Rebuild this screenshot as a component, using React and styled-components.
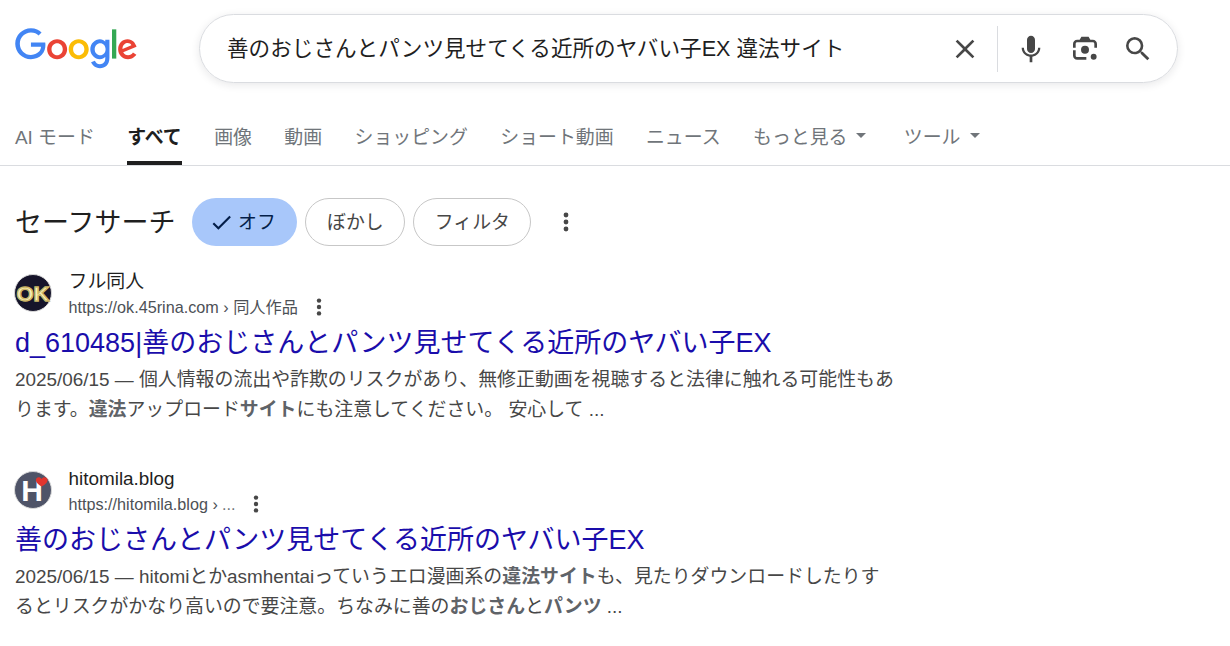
import React from "react";
import styled, { createGlobalStyle } from "styled-components";

const FONT = `Arial, "Liberation Sans", "Noto Sans CJK JP", sans-serif`;

const Global = createGlobalStyle`
  html, body { margin: 0; padding: 0; background: #fff; }
  body { font-family: ${FONT}; width: 1230px; height: 646px; overflow: hidden; }
`;

const Page = styled.div`
  display: flex;
  flex-direction: column;
`;

const Header = styled.header`
  display: flex;
  align-items: flex-start;
  padding: 14px 0 0 15px;
  height: 84px;
  box-sizing: border-box;
`;

const LogoSvg = styled.svg`
  width: 122.5px;
  height: 41.4px;
  margin: 14px 61.5px 0 0;
  flex: none;
`;

const SearchBox = styled.div`
  width: 979px;
  height: 69px;
  box-sizing: border-box;
  border: 1px solid #dadce0;
  border-radius: 35px;
  box-shadow: 0 2px 8px rgba(32, 33, 36, 0.1);
  display: flex;
  align-items: center;
  padding: 0 23px 0 27px;
`;

const Query = styled.div`
  flex: 1;
  font-size: 21.6px;
  color: #1f1f1f;
  white-space: nowrap;
  padding-bottom: 5px;
`;

const SearchIcons = styled.div`
  display: flex;
  align-items: center;
`;

const ClearButton = styled.div`
  display: flex;
  padding-right: 16px;
  margin-right: 17px;
  height: 46px;
  align-items: center;
  border-right: 1px solid #dadce0;
`;

const IconSlot = styled.div`
  display: flex;
  width: 32px;
  height: 32px;
  align-items: center;
  justify-content: center;
  margin-left: ${(p) => p.$gap || 0}px;
`;

const Tabs = styled.nav`
  display: flex;
  gap: 32.4px;
  height: 82px;
  padding-left: 15px;
  box-sizing: border-box;
  border-bottom: 1px solid #dadce0;
`;

const Tab = styled.div`
  display: flex;
  align-items: center;
  height: 81px;
  padding-top: 25px;
  box-sizing: border-box;
  font-size: 18.9px;
  white-space: nowrap;
  color: ${(p) => (p.$active ? "#1f1f1f" : "#70757a")};
  font-weight: ${(p) => (p.$active ? 700 : 400)};
  border-bottom: ${(p) => (p.$active ? "4px solid #1f1f1f" : "4px solid transparent")};
  margin-left: ${(p) => p.$offset || 0}px;
`;

const Caret = styled.span`
  width: 0;
  height: 0;
  margin-left: 9px;
  border-left: 5px solid transparent;
  border-right: 5px solid transparent;
  border-top: 5px solid #70757a;
`;

const SafeRow = styled.div`
  display: flex;
  align-items: center;
  margin-top: 32px;
  padding-left: 15px;
  height: 48px;
`;

const SafeTitle = styled.div`
  font-size: 27px;
  color: #1f1f1f;
  margin-right: 17px;
  white-space: nowrap;
  padding-bottom: 4px;
`;

const Chip = styled.div`
  height: 48px;
  box-sizing: border-box;
  width: ${(p) => p.$w}px;
  margin-right: 8px;
  padding-bottom: 3px;
  border-radius: 24px;
  display: flex;
  align-items: center;
  justify-content: center;
  gap: 4px;
  font-size: 18.9px;
  color: ${(p) => (p.$on ? "#041e49" : "#474747")};
  background: ${(p) => (p.$on ? "#a8c7fa" : "#fff")};
  border: ${(p) => (p.$on ? "none" : "1px solid #c7c7c7")};
`;

const CheckSvg = styled.svg`
  width: 25px;
  height: 25px;
  margin: 3px 0 0 -5px;
`;

const Dots = styled.svg`
  flex: none;
  width: ${(p) => p.$size || 22}px;
  height: ${(p) => p.$size || 22}px;
  margin-left: ${(p) => p.$gap || 0}px;
`;

const Results = styled.main`
  padding-left: 15px;
  margin-top: 22px;
  display: flex;
  flex-direction: column;
  gap: 40px;
`;

const Result = styled.article`
  width: 880px;
`;

const SiteRow = styled.div`
  display: flex;
  align-items: center;
  gap: 17.5px;
  height: 50px;
`;

const Favicon = styled.svg`
  width: 38px;
  height: 38px;
  margin: 0 -1px;
  flex: none;
`;

const SiteText = styled.div`
  display: flex;
  flex-direction: column;
  padding-top: 2px;
`;

const SiteName = styled.div`
  font-size: 18.9px;
  line-height: 26px;
  color: #1f1f1f;
`;

const UrlLine = styled.div`
  display: flex;
  align-items: center;
  font-size: 16.2px;
  line-height: 24px;
  color: #4d5156;
  white-space: nowrap;
`;

const Title = styled.h3`
  margin: 7px 0 0;
  font-size: 27px;
  line-height: 36px;
  font-weight: 400;
  color: #1a0dab;
  white-space: nowrap;
`;

const Snippet = styled.p`
  margin: 4px 0 0;
  font-size: 18.9px;
  line-height: 30px;
  color: #474747;
  b { font-weight: 700; color: #5f6368; }
`;

const Ellipsis = styled.span`
  color: #70757a;
  margin-left: 0.25em;
`;

const MoreDots = ({ size, gap }) => (
  <Dots viewBox="0 0 24 24" $size={size} $gap={gap} fill="#474747">
    <circle cx="12" cy="5" r="2.4" />
    <circle cx="12" cy="12" r="2.4" />
    <circle cx="12" cy="19" r="2.4" />
  </Dots>
);

const GoogleLogo = () => (
  <LogoSvg viewBox="0 0 272 92">
    <path fill="#EA4335" d="M115.75 47.18c0 12.77-9.99 22.18-22.25 22.18s-22.25-9.41-22.25-22.18C71.25 34.32 81.24 25 93.5 25s22.25 9.32 22.25 22.18zm-9.74 0c0-7.98-5.79-13.44-12.51-13.44S80.99 39.2 80.99 47.18c0 7.9 5.79 13.44 12.51 13.44s12.51-5.55 12.51-13.44z" />
    <path fill="#FBBC05" d="M163.75 47.18c0 12.77-9.99 22.18-22.25 22.18s-22.25-9.41-22.25-22.18c0-12.85 9.99-22.18 22.25-22.18s22.25 9.32 22.25 22.18zm-9.74 0c0-7.98-5.79-13.44-12.51-13.44s-12.51 5.46-12.51 13.44c0 7.9 5.79 13.44 12.51 13.44s12.51-5.55 12.51-13.44z" />
    <path fill="#4285F4" d="M209.75 26.34v39.82c0 16.38-9.66 23.07-21.08 23.07-10.75 0-17.22-7.19-19.66-13.07l8.48-3.53c1.51 3.61 5.21 7.87 11.17 7.87 7.31 0 11.84-4.51 11.84-13v-3.19h-.34c-2.18 2.69-6.38 5.04-11.68 5.04-11.09 0-21.25-9.66-21.25-22.09 0-12.52 10.16-22.26 21.25-22.26 5.29 0 9.49 2.35 11.68 4.96h.34v-3.61h9.25zm-8.56 20.92c0-7.81-5.21-13.52-11.84-13.52-6.72 0-12.35 5.71-12.35 13.52 0 7.73 5.63 13.36 12.35 13.36 6.63 0 11.84-5.63 11.84-13.36z" />
    <path fill="#34A853" d="M225 3v65h-9.5V3h9.5z" />
    <path fill="#EA4335" d="M262.02 54.48l7.56 5.04c-2.44 3.61-8.32 9.83-18.48 9.83-12.6 0-22.01-9.74-22.01-22.18 0-13.19 9.49-22.18 20.92-22.18 11.51 0 17.14 9.16 18.98 14.11l1.01 2.52-29.65 12.28c2.27 4.45 5.8 6.72 10.75 6.72 4.96 0 8.4-2.44 10.92-6.14zm-23.27-7.98l19.82-8.23c-1.09-2.77-4.37-4.7-8.23-4.7-4.95 0-11.84 4.37-11.59 12.93z" />
    <path fill="#4285F4" d="M35.29 41.41V32H67c.31 1.64.47 3.58.47 5.68 0 7.06-1.93 15.79-8.15 22.01-6.05 6.3-13.78 9.66-24.02 9.66C16.32 69.35.36 53.89.36 34.91.36 15.93 16.32.47 35.3.47c10.5 0 17.98 4.12 23.6 9.49l-6.64 6.64c-4.03-3.78-9.49-6.72-16.97-6.72-13.86 0-24.7 11.17-24.7 25.03 0 13.86 10.84 25.03 24.7 25.03 8.99 0 14.11-3.61 17.39-6.89 2.66-2.66 4.41-6.46 5.1-11.65l-22.49.01z" />
  </LogoSvg>
);

const CloseIcon = () => (
  <svg width="32" height="32" viewBox="0 0 24 24" fill="#474747">
    <path d="M19 6.41 17.59 5 12 10.59 6.41 5 5 6.41 10.59 12 5 17.59 6.41 19 12 13.41 17.59 19 19 17.59 13.41 12z" />
  </svg>
);

const MicIcon = () => (
  <svg width="32" height="32" viewBox="0 0 24 24" fill="#474747">
    <path d="M12 15c1.66 0 3-1.31 3-2.97v-7.02c0-1.66-1.34-3.01-3-3.01s-3 1.34-3 3.01v7.02c0 1.66 1.34 2.97 3 2.97z" />
    <path d="M17.3 11.03c0 3-2.54 5.1-5.3 5.1s-5.3-2.1-5.3-5.1H5c0 3.41 2.72 6.23 6 6.72V22h2v-4.25c3.28-.49 6-3.31 6-6.72h-1.7z" />
  </svg>
);

const LensIcon = () => (
  <svg width="32" height="32" viewBox="0 0 24 24" fill="none">
    <path fill="#474747" d="M9.300 2.800 8 5H6.200C4.400 5 3 6.400 3 8.200V11h2V8.200C5 7.500 5.500 7 6.200 7h11.600c.7 0 1.200.5 1.200 1.200V11h2V8.200C21 6.400 19.600 5 17.800 5H16l-1.300-2.200z" />
    <path fill="#474747" d="M3 13h2v3.800C5 17.500 5.500 18 6.200 18H13v2H6.200C4.400 20 3 18.600 3 16.800z" />
    <circle cx="12" cy="12.500" r="3" fill="#474747" />
    <circle cx="18.500" cy="17.800" r="2.200" fill="#474747" />
  </svg>
);

const SearchIcon = () => (
  <svg width="32" height="32" viewBox="0 0 24 24" fill="#474747">
    <path d="M15.500 14h-.79l-.28-.27A6.471 6.471 0 0 0 16 9.500 6.500 6.500 0 1 0 9.500 16c1.610 0 3.090-.59 4.230-1.570l.27.280v.79l5 4.990L20.490 19l-4.990-5zm-6 0C7.010 14 5 11.990 5 9.500S7.010 5 9.500 5 14 7.010 14 9.500 11.990 14 9.500 14z" />
  </svg>
);

const CheckIcon = () => (
  <CheckSvg viewBox="0 0 24 24" fill="#041e49">
    <path d="M9 16.170 4.830 12l-1.420 1.410L9 19 21 7l-1.410-1.410z" />
  </CheckSvg>
);

const OkFavicon = () => (
  <Favicon viewBox="0 0 38 38">
    <circle cx="19" cy="19" r="18.500" fill="#16142a" stroke="#d9d9d9" strokeWidth="1" />
    <text x="19" y="26.500" textAnchor="middle" fontFamily="Liberation Sans" fontWeight="700" fontSize="21" textLength="33" lengthAdjust="spacingAndGlyphs" fill="#fbf3c4" stroke="#cdb767" strokeWidth="1.400">OK</text>
  </Favicon>
);

const HFavicon = () => (
  <Favicon viewBox="0 0 38 38">
    <circle cx="19" cy="19" r="18.500" fill="#4f5468" stroke="#d9d9d9" strokeWidth="1" />
    <text x="18" y="30" textAnchor="middle" fontFamily="Liberation Sans" fontWeight="700" fontSize="30" fill="#fff">H</text>
    <path fill="#e0352e" d="M27.500 15.500 C 23 12.500 21.500 10.500 22 8.500 C 22.500 6 26 5.500 27.500 8 C 29 5.500 33 6 33.500 8.500 C 34 11 31.500 13.500 27.500 15.500 Z" />
  </Favicon>
);

const tabs = ["画像", "動画", "ショッピング", "ショート動画", "ニュース"];

export default function App() {
  return (
    <Page>
      <Global />
      <Header>
        <GoogleLogo />
        <SearchBox>
          <Query>善のおじさんとパンツ見せてくる近所のヤバい子EX 違法サイト</Query>
          <SearchIcons>
            <ClearButton><CloseIcon /></ClearButton>
            <IconSlot><MicIcon /></IconSlot>
            <IconSlot $gap={22}><LensIcon /></IconSlot>
            <IconSlot $gap={21}><SearchIcon /></IconSlot>
          </SearchIcons>
        </SearchBox>
      </Header>
      <Tabs>
        <Tab>AI モード</Tab>
        <Tab $active>すべて</Tab>
        {tabs.map((t) => <Tab key={t}>{t}</Tab>)}
        <Tab>もっと見る<Caret /></Tab>
        <Tab $offset={5}>ツール<Caret /></Tab>
      </Tabs>
      <SafeRow>
        <SafeTitle>セーフサーチ</SafeTitle>
        <Chip $on $w={105}><CheckIcon />オフ</Chip>
        <Chip $w={100}>ぼかし</Chip>
        <Chip $w={118}>フィルタ</Chip>
        <MoreDots size={24} gap={15} />
      </SafeRow>
      <Results>
        <Result>
          <SiteRow>
            <OkFavicon />
            <SiteText>
              <SiteName>フル同人</SiteName>
              <UrlLine>https://ok.45rina.com › 同人作品<MoreDots size={22} gap={10} /></UrlLine>
            </SiteText>
          </SiteRow>
          <Title>d_610485|善のおじさんとパンツ見せてくる近所のヤバい子EX</Title>
          <Snippet>2025/06/15 — 個人情報の流出や詐欺のリスクがあり、無修正動画を視聴すると法律に触れる可能性もあります。<b>違法</b>アップロード<b>サイト</b>にも注意してください。 安心して ...</Snippet>
        </Result>
        <Result>
          <SiteRow>
            <HFavicon />
            <SiteText>
              <SiteName>hitomila.blog</SiteName>
              <UrlLine>https://hitomila.blog ›<Ellipsis>...</Ellipsis><MoreDots size={22} gap={10} /></UrlLine>
            </SiteText>
          </SiteRow>
          <Title>善のおじさんとパンツ見せてくる近所のヤバい子EX</Title>
          <Snippet>2025/06/15 — hitomiとかasmhentaiっていうエロ漫画系の<b>違法サイト</b>も、見たりダウンロードしたりするとリスクがかなり高いので要注意。ちなみに善の<b>おじさん</b>と<b>パンツ</b> ...</Snippet>
        </Result>
      </Results>
    </Page>
  );
}
